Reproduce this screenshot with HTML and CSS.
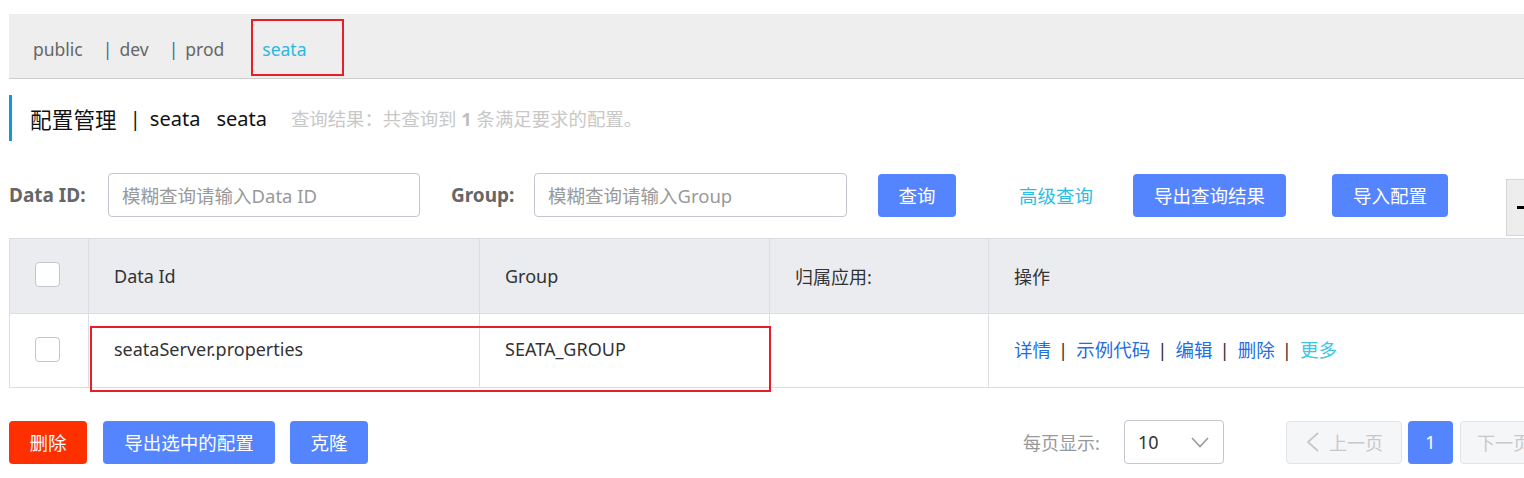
FILE: index.html
```html
<!DOCTYPE html>
<html lang="zh-CN">
<head>
<meta charset="utf-8">
<title>配置管理</title>
<link rel="stylesheet" href="styles.css">
</head>
<body>
<div class="page">
  <div class="ns-bar">
    <span class="ns">public</span>
    <span class="ns-sep">|</span>
    <span class="ns">dev</span>
    <span class="ns-sep">|</span>
    <span class="ns">prod</span>
    <span class="ns ns-active">seata</span>
  </div>

  <div class="title-row">
    <span class="title-main">配置管理</span>
    <span class="title-sep">|</span>
    <span class="title-ns">seata</span>
    <span class="title-ns">seata</span>
    <span class="summary">查询结果：共查询到 <b>1</b> 条满足要求的配置。</span>
  </div>

  <div class="search-row">
    <label class="s-label s-label-data">Data ID:</label>
    <div class="s-input s-input-data">模糊查询请输入Data ID</div>
    <label class="s-label s-label-group">Group:</label>
    <div class="s-input s-input-group">模糊查询请输入Group</div>
    <button class="btn btn-blue btn-query">查询</button>
    <a class="adv-link">高级查询</a>
    <button class="btn btn-blue btn-export">导出查询结果</button>
    <button class="btn btn-blue btn-import">导入配置</button>
    <div class="side-box"><span class="side-dash"></span></div>
  </div>

  <div class="grid">
    <div class="cell head cb-cell"><span class="checkbox"></span></div>
    <div class="cell head">Data Id</div>
    <div class="cell head">Group</div>
    <div class="cell head">归属应用:</div>
    <div class="cell head">操作</div>

    <div class="cell body cb-cell"><span class="checkbox"></span></div>
    <div class="cell body">seataServer.properties</div>
    <div class="cell body">SEATA_GROUP</div>
    <div class="cell body"></div>
    <div class="cell body actions">
      <a class="act">详情</a><span class="act-sep">|</span><a class="act">示例代码</a><span class="act-sep">|</span><a class="act">编辑</a><span class="act-sep">|</span><a class="act">删除</a><span class="act-sep">|</span><a class="act act-more">更多</a>
    </div>
  </div>

  <div class="bottom-row">
    <button class="btn btn-red btn-del">删除</button>
    <button class="btn btn-blue btn-exp-sel">导出选中的配置</button>
    <button class="btn btn-blue btn-clone">克隆</button>
    <div class="pager">
      <span class="pg-label">每页显示:</span>
      <div class="pg-select"><span>10</span>
        <svg class="chev" width="18" height="11" viewBox="0 0 18 11"><polyline points="1,1 9,9.5 17,1" fill="none" stroke="#999" stroke-width="1.6"/></svg>
      </div>
      <div class="pg-btn pg-prev">
        <svg width="14" height="20" viewBox="0 0 14 20"><polyline points="12,1 2,10 12,19" fill="none" stroke="#c8c8c8" stroke-width="1.8"/></svg>
        <span>上一页</span>
      </div>
      <div class="pg-num">1</div>
      <div class="pg-btn pg-next"><span>下一页</span>
        <svg width="14" height="20" viewBox="0 0 14 20"><polyline points="2,1 12,10 2,19" fill="none" stroke="#c8c8c8" stroke-width="1.8"/></svg>
      </div>
    </div>
  </div>

  <div class="mark mark-ns"></div>
  <div class="mark mark-row"></div>
</div>
</body>
</html>
```

FILE: styles.css
```css
* { box-sizing: border-box; }

html, body {
  margin: 0;
  width: 1524px;
  height: 478px;
  overflow: hidden;
  background: #fff;
}

body {
  font-family: "Noto Sans", "Noto Sans CJK SC", sans-serif;
  font-size: 18px;
  color: #333;
}

.page {
  position: relative;
  width: 1640px;
  padding: 14px 0 0 9px;
}

/* namespace bar */
.ns-bar {
  height: 65px;
  background: #eeeeee;
  border-bottom: 1px solid #cccccc;
  display: flex;
  align-items: center;
  padding-left: 24px;
  padding-top: 5px;
  color: #666;
  font-size: 17.5px;
}
.ns { line-height: 24px; }
.ns-sep { margin: 0 7px 0 20px; color: #4a6a8a; }
.ns-active { color: #2cb7e0; margin-left: 38px; }

/* title */
.title-row {
  margin-top: 16px;
  height: 46px;
  border-left: 3px solid #0e9ad6;
  padding-left: 18px;
  display: flex;
  align-items: center;
  color: #111;
}
.title-main { font-size: 21.5px; letter-spacing: 0.2px; }
.title-sep { font-size: 20px; margin: 0 9px 0 13px; }
.title-ns { font-size: 20px; margin-right: 16px; }
.summary { font-size: 18.4px; color: #c8c8c8; margin-left: 8px; }
.summary b { color: #c0c0c0; }

/* search row */
.search-row {
  margin-top: 32px;
  height: 44px;
  display: flex;
  align-items: center;
  position: relative;
}
.s-label { font-weight: bold; color: #666; font-size: 19px; }
.s-label-data { width: 99px; }
.s-label-group { width: 83px; margin-left: 31px; }
.s-input {
  height: 44px;
  border: 1px solid #c4c6cf;
  border-radius: 4px;
  padding-left: 13px;
  display: flex;
  align-items: center;
  color: #999;
  font-size: 18.5px;
}
.s-input-data { width: 312px; }
.s-input-group { width: 313px; }

.btn {
  height: 43px;
  border: none;
  border-radius: 4px;
  color: #fff;
  font-family: inherit;
  font-size: 18.5px;
  padding: 0;
  display: flex;
  align-items: center;
  justify-content: center;
}
.btn-blue { background: #5584ff; }
.btn-red { background: #ff3000; }
.btn-query { width: 78px; margin-left: 31px; }
.adv-link { color: #2cbde4; margin-left: 63px; width: 114px; font-size: 18.5px; }
.btn-export { width: 153px; }
.btn-import { width: 116px; margin-left: 46px; }
.side-box {
  margin-left: 58px;
  align-self: flex-start;
  margin-top: 6px;
  width: 60px;
  height: 57px;
  background: #ededed;
  border: 1px solid #d6d6d6;
  display: flex;
  align-items: center;
  padding-left: 10px;
}
.side-dash { width: 14px; height: 3px; background: #000; }

/* table */
.grid {
  margin-top: 21px;
  display: grid;
  grid-template-columns: 79px 391px 290px 219px 1fr;
  border-top: 1px solid #dcdee3;
  border-left: 1px solid #dcdee3;
}
.cell {
  border-right: 1px solid #dcdee3;
  border-bottom: 1px solid #dcdee3;
  padding-left: 25px;
  display: flex;
  align-items: center;
  font-size: 18px;
  color: #333;
}
.head { height: 75px; background: #ebecf0; padding-bottom: 1px; }
.body { height: 74px; padding-bottom: 3px; }
.cb-cell { padding-left: 25px; }
.body.cb-cell { padding-bottom: 2px; }
.checkbox {
  width: 25px;
  height: 25px;
  border: 1px solid #c4c6cf;
  border-radius: 4px;
  background: #fff;
}
.head.cb-cell .checkbox { margin-bottom: 3px; }

.actions { color: #333; font-size: 18.5px; }
.act { color: #1f6fe0; }
.act-sep { margin: 0 8px 0 7px; color: #333; }
.act-more { color: #3fc6e4; }

/* bottom row */
.bottom-row {
  margin-top: 32px;
  display: flex;
  align-items: center;
  height: 44px;
}
.btn-del { width: 78px; }
.btn-exp-sel { width: 172px; margin-left: 16px; }
.btn-clone { width: 78px; margin-left: 15px; }

.pager {
  display: flex;
  align-items: center;
  margin-left: 655px;
}
.pg-label { color: #999; font-size: 18px; width: 101px; }
.pg-select {
  width: 100px;
  height: 44px;
  border: 1px solid #c4c6cf;
  border-radius: 4px;
  display: flex;
  align-items: center;
  justify-content: space-between;
  padding: 0 14px 0 13px;
  color: #333;
}
.pg-btn {
  height: 43px;
  background: #f5f6f8;
  border: 1px solid #e3e4e8;
  border-radius: 4px;
  color: #c8c8c8;
  display: flex;
  align-items: center;
  justify-content: flex-start;
  gap: 9px;
  padding-left: 19px;
}
.pg-prev { width: 116px; margin-left: 62px; }
.pg-num {
  width: 45px;
  height: 43px;
  margin-left: 6px;
  border-radius: 4px;
  background: #5584ff;
  color: #fff;
  display: flex;
  align-items: center;
  justify-content: center;
}
.pg-next { width: 116px; margin-left: 7px; padding-left: 16px; }

/* annotation marks */
.mark {
  position: absolute;
  border: 2px solid #ea1c26;
}
.mark-ns { left: 251px; top: 19px; width: 93px; height: 57px; }
.mark-row { left: 90px; top: 326px; width: 681px; height: 66px; }
```
